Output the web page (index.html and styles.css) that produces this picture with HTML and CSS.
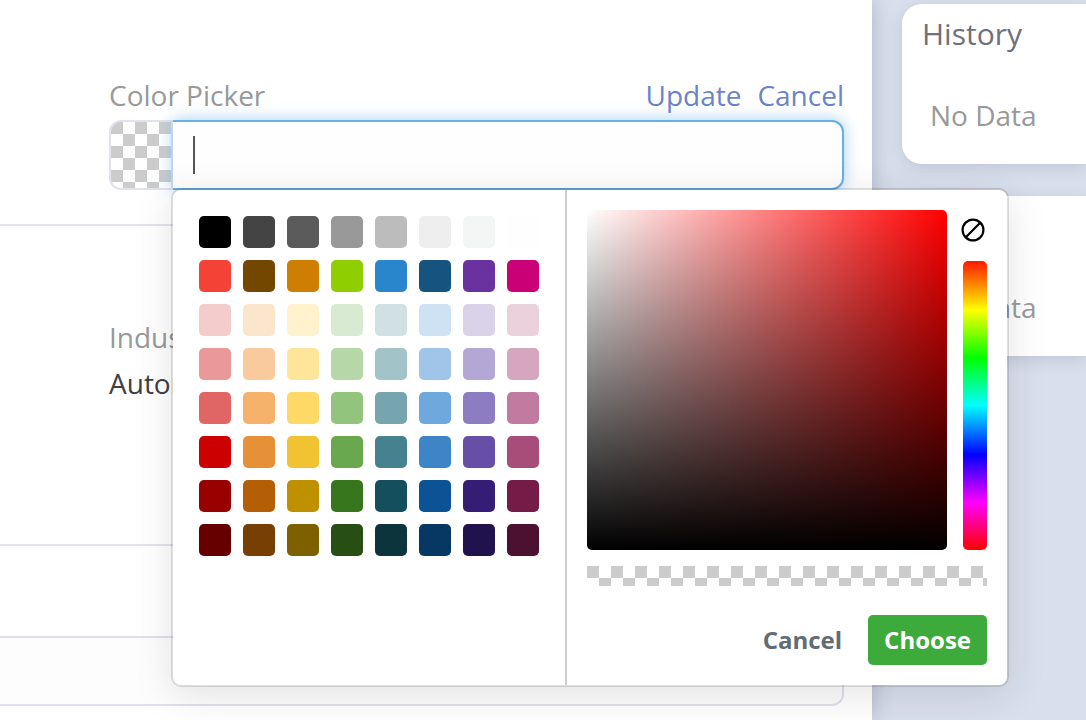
FILE: index.html
```
<!DOCTYPE html>
<html lang="en">
<head>
<meta charset="utf-8">
<title>Record</title>
<link rel="stylesheet" href="styles.css">
</head>
<body>
<div class="page">
  <main class="main">
    <section class="section section-color">
      <div class="field">
        <div class="field-head">
          <span class="label">Color Picker</span>
          <nav class="links"><a class="link">Update</a><a class="link">Cancel</a></nav>
        </div>
        <div class="input-group">
          <div class="preview checker"></div>
          <div class="input"><span class="caret"></span></div>
          <div class="picker">
            <div class="palette" id="palette"></div>
            <div class="mixer">
              <div class="mixer-top">
                <div class="saturation"></div>
                <div class="side">
                  <svg class="none-icon" viewBox="0 0 24 24" width="24" height="24" fill="none" stroke="#000" stroke-width="2.2"><circle cx="12" cy="12" r="10.4"/><path d="M4.8 19.2 19.2 4.8"/></svg>
                  <div class="hue"></div>
                </div>
              </div>
              <div class="alpha checker"></div>
              <div class="actions"><span class="cancel">Cancel</span><span class="choose">Choose</span></div>
            </div>
          </div>
        </div>
      </div>
    </section>
    <section class="section section-industry">
      <div class="label">Industry</div>
      <div class="value">Automotive</div>
    </section>
    <div class="bottom-field"></div>
  </main>
  <aside class="sidebar">
    <section class="card"><h2 class="card-title">History</h2><p class="empty">No Data</p></section>
    <section class="card"><h2 class="card-title">Files</h2><p class="empty">No Data</p></section>
  </aside>
</div>
<script src="palette.js"></script>
</body>
</html>
```
FILE: styles.css
```
* { box-sizing: border-box; }
body {
  margin: 0;
  overflow: hidden;
  font-family: "Open Sans", "Noto Sans", sans-serif;
  font-size: 28px;
  line-height: 38px;
  color: #999;
}
.page { display: grid; grid-template-columns: 872px 1fr; height: 720px; background: #d9e0ed; }
.main { background: #fff; box-shadow: 0 0 20px rgba(60, 75, 100, .3); min-width: 0; }
.section { border-bottom: 2px solid #e3e4f0; padding: 0 28px 0 109px; }
.section-color { height: 226px; padding-top: 76px; }
.section-industry { height: 320px; padding-top: 92px; }
.field-head { display: flex; justify-content: space-between; height: 44px; }
.links { display: flex; gap: 16px; }
.link { color: #6c83c7; }
.value { margin-top: 8px; color: #404040; }
.input-group { position: relative; display: flex; height: 70px; }
.checker {
  background-color: #fff;
  background-image: conic-gradient(#fff 25%, #ccc 0 50%, #fff 0 75%, #ccc 0);
  background-size: 24px 24px;
}
.preview { width: 64px; border: 2px solid #e0e2ee; border-radius: 12px 0 0 12px; }
.input {
  flex: 1;
  padding: 14px 20px;
  border: 2px solid #66afe9;
  border-left: 0;
  border-radius: 0 12px 12px 0;
  background: #fefefe;
  box-shadow: 0 0 16px rgba(102, 175, 233, .6);
}
.caret { display: block; width: 2px; height: 38px; background: #555; }
.picker {
  position: absolute;
  z-index: 2;
  top: 68px;
  left: 62px;
  display: grid;
  grid-template-columns: 394px 1fr;
  width: 838px;
  height: 499px;
  border: 2px solid rgba(0, 0, 0, .12);
  border-radius: 10px;
  background: #fff;
  background-clip: padding-box;
  box-shadow: 0 8px 40px rgba(0, 0, 0, .11);
}
.palette {
  display: grid;
  grid-template-columns: repeat(8, 32px);
  grid-auto-rows: 32px;
  gap: 12px;
  padding: 26px;
  border-right: 2px solid #ccced1;
}
.swatch { border-radius: 5px; }
.mixer { padding: 20px; }
.mixer-top { display: flex; gap: 16px; height: 340px; }
.saturation {
  width: 360px;
  border-radius: 5px;
  background: linear-gradient(to top, #000, transparent), linear-gradient(to right, #fff, #f00);
}
.side { width: 24px; padding-top: 8px; }
.none-icon { display: block; margin-left: -2px; }
.hue {
  height: 289px;
  margin-top: 19px;
  border-radius: 5px;
  background: linear-gradient(#ff1800, #ff0 17%, #0f0 33.5%, #0ff 50%, #00f 67%, #f0f 83.5%, #f00);
}
.alpha { height: 20px; margin-top: 16px; }
.actions {
  display: flex;
  justify-content: flex-end;
  align-items: center;
  gap: 26px;
  margin-top: 29px;
  font-size: 24px;
  font-weight: 700;
}
.cancel { color: #616c73; }
.choose { padding: 6px 16px; border-radius: 5px; background: #3dab3b; color: #fff; }
.bottom-field {
  height: 70px;
  margin: 90px 28px 0 0;
  border: 2px solid #dfe0ed;
  border-left: 0;
  border-radius: 0 12px 12px 0;
  background: #fdfdfe;
}
.sidebar { display: grid; align-content: start; gap: 32px; padding: 4px 0 0 30px; }
.card {
  height: 160px;
  padding: 10px 20px;
  border-radius: 20px 0 0 20px;
  background: #fff;
  box-shadow: 0 4px 16px rgba(60, 75, 100, .17);
}
.card-title { margin: 0; font-size: 30px; font-weight: 400; line-height: 40px; color: #70707b; }
.empty { margin: 42px 0 0 8px; }
```
FILE: palette.js
```
const colors = [
  "#000000", "#444444", "#5b5b5b", "#999999", "#bcbcbc", "#eeeeee", "#f3f6f4", "#fefefe",
  "#f44336", "#744700", "#ce7e00", "#8fce00", "#2986cc", "#16537e", "#6a329f", "#c90076",
  "#f4cccc", "#fce5cd", "#fff2cc", "#d9ead3", "#d0e0e3", "#cfe2f3", "#d9d2e9", "#ead1dc",
  "#ea9999", "#f9cb9c", "#ffe599", "#b6d7a8", "#a2c4c9", "#9fc5e8", "#b4a7d6", "#d5a6bd",
  "#e06666", "#f6b26b", "#ffd966", "#93c47d", "#76a5af", "#6fa8dc", "#8e7cc3", "#c27ba0",
  "#cc0000", "#e69138", "#f1c232", "#6aa84f", "#45818e", "#3d85c6", "#674ea7", "#a64d79",
  "#990000", "#b45f06", "#bf9000", "#38761d", "#134f5c", "#0b5394", "#351c75", "#741b47",
  "#660000", "#783f04", "#7f6000", "#274e13", "#0c343d", "#073763", "#20124d", "#4c1130"
];
const palette = document.getElementById("palette");
for (const color of colors) {
  const swatch = document.createElement("div");
  swatch.className = "swatch";
  swatch.style.background = color;
  palette.append(swatch);
}
```
